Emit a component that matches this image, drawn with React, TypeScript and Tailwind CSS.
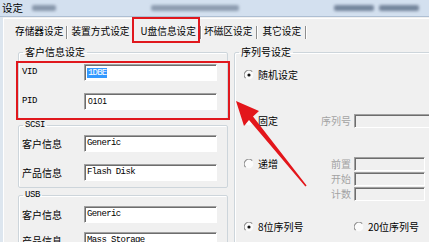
import React from "react";

const cjk = "font-['Noto_Sans_CJK_SC','Noto_Sans_CJK_TC',sans-serif]";
const mono = "font-['Liberation_Mono',monospace]";

function Radio({ checked }: { checked?: boolean }) {
  return (
    <svg width="10" height="10" viewBox="0 0 10 10" className="shrink-0">
      <circle cx="5" cy="5" r="4.3" fill="#fbfbfb" />
      <path d="M1.6 8.2 A4.4 4.4 0 0 1 8.2 1.6" fill="none" stroke="#8c8c8c" strokeWidth="1.1" />
      {checked && <circle cx="5" cy="5" r="1.6" fill="#111" />}
    </svg>
  );
}

function Field({ children, disabled, w }: { children?: React.ReactNode; disabled?: boolean; w: string }) {
  return (
    <div
      className={`${w} flex items-center pl-[2px] border border-t-[#a0a0a0] border-l-[#a0a0a0] border-r-white border-b-white shadow-[inset_1px_1px_0_#6d6d6d] ${
        disabled ? "h-[14px] bg-[#f0f0f0]" : "h-[17px] bg-white"
      }`}
    >
      {children}
    </div>
  );
}

function Row({ label, latin, children }: { label: string; latin?: boolean; children: React.ReactNode }) {
  return (
    <div className="flex items-center pl-[3px]">
      <span
        className={`w-[62px] text-black leading-none ${
          latin ? `${mono} text-[9px] tracking-[-0.4px]` : `${cjk} text-[10px]`
        }`}
      >
        {label}
      </span>
      <Field w="w-[133px]">{children}</Field>
    </div>
  );
}

const Val = ({ t }: { t: string }) => (
  <span className={`${mono} text-[9px] tracking-[-0.6px] leading-none text-black whitespace-pre`}>{t}</span>
);

function Group({ title, latin, className, children }: { title: string; latin?: boolean; className?: string; children: React.ReactNode }) {
  return (
    <fieldset className={`border border-[#cdd5db] rounded-[2px] shadow-[inset_1px_1px_0_#fff] ${className ?? ""}`}>
      <legend
        className={`ml-[4px] px-[2px] leading-[12px] text-black ${
          latin ? `${mono} text-[9px] tracking-[-0.4px]` : `${cjk} text-[10px]`
        }`}
      >
        {title}
      </legend>
      {children}
    </fieldset>
  );
}

const tabs = "text-[9.7px] leading-none text-black";
const Sep = ({ className }: { className: string }) => (
  <div className={`w-px h-[13px] bg-[#8e8e8e] shadow-[1px_0_0_#fff] ${className}`} />
);

const Dis = ({ t }: { t: string }) => (
  <span className={`${cjk} w-[33px] text-right text-[10px] leading-none text-[#a3a3a3]`}>{t}</span>
);

function TitleBar() {
  return (
    <div className="relative h-[17px] shrink-0 flex items-center">
      {/* caption glass with the blurred-out window title */}
      <svg className="absolute inset-0" width="429" height="17" viewBox="0 0 429 17">
        <defs>
          <filter id="bl" x="-20%" y="-100%" width="140%" height="300%">
            <feGaussianBlur stdDeviation="1.4" />
          </filter>
        </defs>
        <rect width="429" height="17" fill="#d3e0ef" />
        <rect y="16" width="429" height="1" fill="#aebfd3" />
        <g filter="url(#bl)">
          <rect x="32" y="5" width="24" height="6" rx="2" fill="#8797ab" />
          <rect x="151" y="5" width="88" height="6" rx="2" fill="#8d9cb0" />
          <rect x="334" y="5" width="40" height="6" rx="2" fill="#74859c" />
          <rect x="379" y="5" width="40" height="6" rx="2" fill="#74859c" />
        </g>
      </svg>
      <span className={`${cjk} relative text-[10.5px] leading-none ml-[2px] text-black`}>设定</span>
    </div>
  );
}

export default function App() {
  return (
    <div className="w-[429px] h-[242px] overflow-hidden relative bg-[#f0f0f0]">
      <TitleBar />

      <div className="flex">
        <div className="w-[3px] shrink-0 bg-[#dde6ef]" />
        <div className="flex-1 flex flex-col border-l border-t border-white mt-px">
          {/* Tabs */}
          <div className={`h-[26px] shrink-0 flex items-center ${cjk} ${tabs}`}>
            <span className="ml-[11px]">存储器设定</span>
            <Sep className="ml-[3px]" />
            <span className="ml-[4px]">装置方式设定</span>
            <Sep className="ml-[2px]" />
            <span className="ml-[8px]">U盘信息设定</span>
            <Sep className="ml-[4px]" />
            <span className="ml-[3px]">坏磁区设定</span>
            <Sep className="ml-[4px]" />
            <span className="ml-[5px]">其它设定</span>
            <Sep className="ml-[4px]" />
          </div>

          <div className="flex mt-px">
            {/* Left column */}
            <div className="ml-[14px] w-[210px] shrink-0 flex flex-col">
              <Group title="客户信息设定">
                <div className="pt-[6px] pb-[8px] flex flex-col gap-[12px]">
                  <Row label="VID" latin>
                    <span className={`${mono} text-[9px] tracking-[-0.8px] leading-[10px] bg-[#3399ff] text-white px-px`}>1DBE</span>
                  </Row>
                  <Row label="PID" latin>
                    <span className="font-['Liberation_Sans',sans-serif] text-[8.5px] leading-none text-black ml-px">0101</span>
                  </Row>
                </div>
              </Group>
              <Group title="SCSI" latin>
                <div className="pt-[4px] pb-[6px] flex flex-col gap-[12px]">
                  <Row label="客户信息">
                    <Val t="Generic" />
                  </Row>
                  <Row label="产品信息">
                    <Val t="Flash Disk" />
                  </Row>
                </div>
              </Group>
              <Group title="USB" latin className="mt-px">
                <div className="pt-[5px] pb-[6px] flex flex-col gap-[9px]">
                  <Row label="客户信息">
                    <Val t="Generic" />
                  </Row>
                  <Row label="产品信息">
                    <Val t="Mass Storage" />
                  </Row>
                </div>
              </Group>
            </div>

            {/* Right column */}
            <Group title="序列号设定" className="ml-[6px] w-[200px] shrink-0 self-start">
              <div className={`pl-[9px] pt-[10px] pb-[20px] flex flex-col ${cjk} text-[10px] leading-none text-black`}>
                <div className="h-[14px] flex items-center">
                  <Radio checked />
                  <span className="ml-[4px]">随机设定</span>
                </div>

                <div className="mt-[32px] h-[14px] flex items-center">
                  <div className="w-[74px] flex items-center">
                    <Radio />
                    <span className="ml-[4px]">固定</span>
                  </div>
                  <Dis t="序列号" />
                  <div className="ml-[3px]">
                    <Field disabled w="w-[90px]" />
                  </div>
                </div>

                <div className="mt-[29px] flex items-start">
                  <div className="w-[74px] h-[14px] flex items-center">
                    <Radio />
                    <span className="ml-[4px]">递增</span>
                  </div>
                  <div className="flex flex-col gap-px">
                    {["前置", "开始", "计数"].map((t) => (
                      <div key={t} className="h-[14px] flex items-center">
                        <Dis t={t} />
                        <div className="ml-[3px]">
                          <Field disabled w="w-[71px]" />
                        </div>
                      </div>
                    ))}
                  </div>
                </div>

                <div className="mt-[19px] h-[14px] flex items-center">
                  <div className="w-[110px] flex items-center">
                    <Radio checked />
                    <span className="ml-[4px]">8位序列号</span>
                  </div>
                  <Radio />
                  <span className="ml-[4px]">20位序列号</span>
                </div>
              </div>
            </Group>
          </div>
        </div>
      </div>

      {/* Red annotations */}
      <div className="absolute left-[132px] top-[17px] w-[68px] h-[26px] border-2 border-[#e0181d]" />
      <div className="absolute left-[16px] top-[61px] w-[214px] h-[59px] border-2 border-[#e0181d]" />
      <svg className="absolute left-0 top-0" width="429" height="242" viewBox="0 0 429 242">
        <polygon
          points="236,101 259,111 253,116.5 306.6,185.6 305.4,186.4 249,120 244,126"
          fill="#e3161b"
        />
      </svg>
    </div>
  );
}
